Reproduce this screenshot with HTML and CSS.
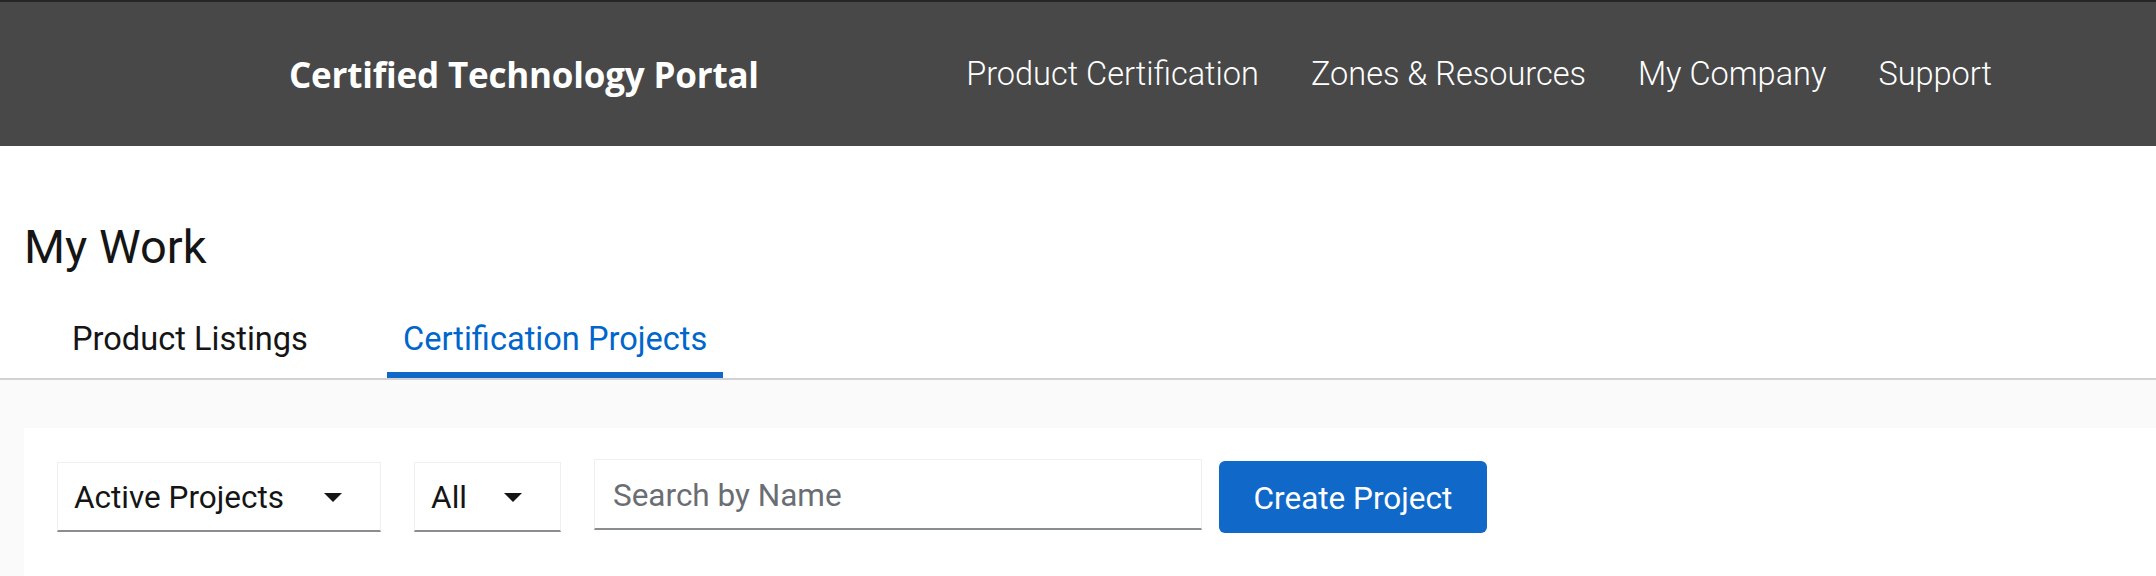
FILE: index.html
```html
<!DOCTYPE html>
<html lang="en">
<head>
<meta charset="utf-8">
<title>My Work - Certified Technology Portal</title>
<link rel="stylesheet" href="styles.css">
</head>
<body>
<header class="topbar">
  <div class="brand">Certified Technology Portal</div>
  <nav class="mainnav">
    <a class="mainnav-link" href="#">Product Certification</a>
    <a class="mainnav-link" href="#">Zones &amp; Resources</a>
    <a class="mainnav-link" href="#">My Company</a>
    <a class="mainnav-link" href="#">Support</a>
  </nav>
</header>
<main class="page">
  <h1 class="page-title">My Work</h1>
  <div class="tabs">
    <button class="tab">Product Listings</button>
    <button class="tab tab-active">Certification Projects</button>
  </div>
</main>
<section class="workspace">
  <div class="card">
    <div class="toolbar">
      <button class="select select-wide">
        <span class="select-label">Active Projects</span>
        <svg class="caret" width="18" height="9" viewBox="0 0 18 9"><polygon points="0,0 18,0 9,9" fill="#151515"/></svg>
      </button>
      <button class="select select-narrow">
        <span class="select-label">All</span>
        <svg class="caret" width="18" height="9" viewBox="0 0 18 9"><polygon points="0,0 18,0 9,9" fill="#151515"/></svg>
      </button>
      <input class="search" type="text" placeholder="Search by Name">
      <button class="btn-primary">Create Project</button>
    </div>
  </div>
</section>
</body>
</html>
```
FILE: styles.css
```css
* { box-sizing: border-box; }

html, body {
  margin: 0;
  padding: 0;
  background: #ffffff;
  font-family: Roboto, "Liberation Sans", sans-serif;
  color: #151515;
}

.topbar {
  height: 146px;
  background: #484848;
  border-top: 2px solid #262626;
  display: flex;
  align-items: center;
  justify-content: space-between;
  padding: 0 164px 0 289px;
}

.brand {
  font-family: "Open Sans", "Liberation Sans", sans-serif;
  font-weight: 700;
  font-size: 35px;
  color: #ffffff;
  letter-spacing: -0.2px;
}

.mainnav {
  display: flex;
  gap: 52px;
}

.mainnav-link {
  font-family: Roboto, "Liberation Sans", sans-serif;
  font-weight: 300;
  font-size: 32.5px;
  color: #ffffff;
  text-decoration: none;
}

.page {
  padding: 73px 0 0 0;
}

.page-title {
  margin: 0 0 41px 24px;
  font-weight: 400;
  font-size: 47px;
  line-height: 55px;
  color: #151515;
}

.tabs {
  display: flex;
  gap: 63px;
  padding-left: 56px;
  border-bottom: 2px solid #d2d2d2;
}

.tab {
  font-family: Roboto, "Liberation Sans", sans-serif;
  font-size: 32.6px;
  line-height: 48px;
  padding: 0 16px 9px 16px;
  border: 0;
  border-bottom: 6px solid transparent;
  background: none;
  color: #151515;
  margin-bottom: 0;
}

.tab-active {
  color: #0066cc;
  border-bottom-color: #1068c8;
}

.workspace {
  background: #fafafa;
  padding: 48px 0 0 24px;
}

.card {
  background: #ffffff;
  height: 148px;
  padding: 31px 0 0 33px;
}

.toolbar {
  display: flex;
  align-items: flex-start;
}

.select {
  display: flex;
  align-items: center;
  height: 70px;
  margin-top: 3px;
  margin-right: 33px;
  padding: 2px 38px 0 16px;
  background: #ffffff;
  border: 1px solid #f0f0f0;
  border-bottom: 2px solid #8a8d90;
  font-family: Roboto, "Liberation Sans", sans-serif;
  font-size: 31.5px;
  color: #151515;
}

.select-wide .select-label { margin-right: 40px; }
.select-narrow .select-label { margin-right: 37px; }

.caret { display: block; }

.search {
  width: 608px;
  height: 71px;
  margin-right: 17px;
  padding: 2px 16px 0 18px;
  border: 1px solid #f0f0f0;
  border-bottom: 2px solid #8a8d90;
  font-family: Roboto, "Liberation Sans", sans-serif;
  font-size: 31.5px;
  color: #151515;
  background: #ffffff;
  outline: none;
}

.search::placeholder { color: #6a6e73; }

.btn-primary {
  width: 268px;
  height: 72px;
  margin-top: 2px;
  padding: 3px 0 0 0;
  border: 0;
  border-radius: 6px;
  background: #1068c8;
  color: #ffffff;
  font-family: Roboto, "Liberation Sans", sans-serif;
  font-size: 31.5px;
}
```
